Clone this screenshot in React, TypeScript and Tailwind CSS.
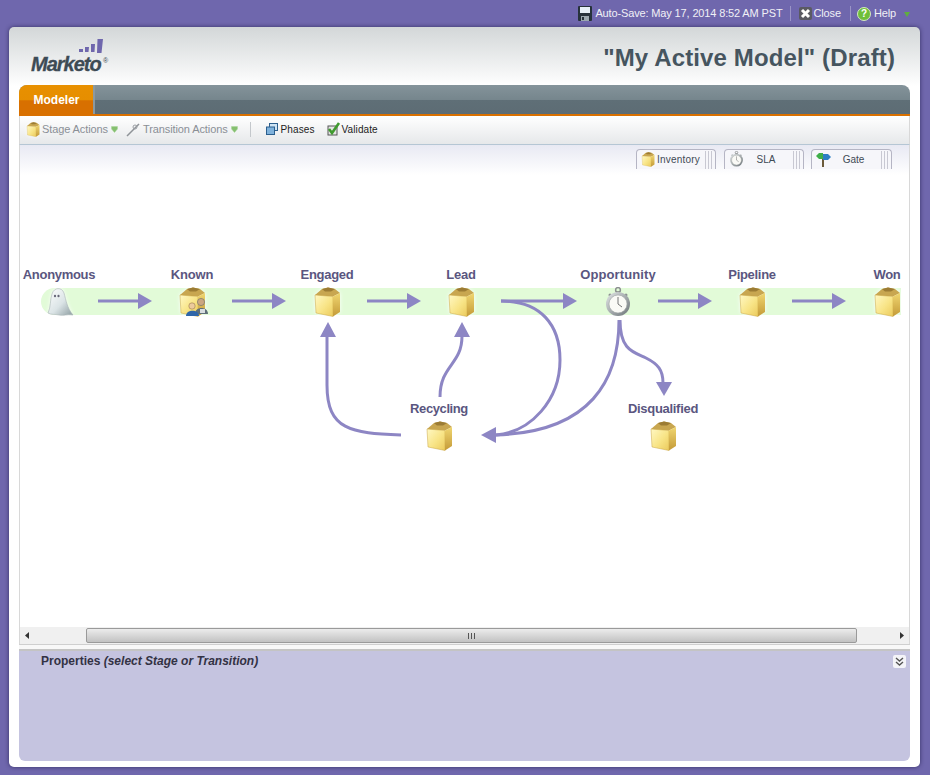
import React from "react";

const font = { fontFamily: '"Liberation Sans", Arial, sans-serif' };

function BoxIcon({ size = 28 }: { size?: number }) {
  return (
    <svg width={size} height={(size * 30) / 28} viewBox="0 0 28 30" className="drop-shadow-[0_0_2px_rgba(255,255,255,0.9)]">
      <defs>
        <linearGradient id="boxFront" x1="0" y1="0" x2="1" y2="1">
          <stop offset="0" stopColor="#fff8c4" />
          <stop offset="0.55" stopColor="#f8e486" />
          <stop offset="1" stopColor="#ebca5c" />
        </linearGradient>
        <linearGradient id="boxSide" x1="0" y1="0" x2="0" y2="1">
          <stop offset="0" stopColor="#f0d670" />
          <stop offset="1" stopColor="#c49a38" />
        </linearGradient>
      </defs>
      <path d="M2 8 L9 2 L15 0.5 L22 2 L27 6 L20 9.5 L5 9 Z" fill="#c8a650" />
      <path d="M9 2 L15 0.5 L22 2 L18 4.5 L12 4.5 Z" fill="#9c7c34" />
      <path d="M2 8 L20 9.5 L20 29.5 L3 26 Z" fill="url(#boxFront)" stroke="#c9a444" strokeWidth="0.5" />
      <path d="M20 9.5 L27 6 L27 25 L20 29.5 Z" fill="url(#boxSide)" />
    </svg>
  );
}

function GhostIcon() {
  return (
    <svg width="30" height="30" viewBox="0 0 30 30" className="drop-shadow-[0_0_2px_rgba(255,255,255,0.9)]">
      <defs>
        <linearGradient id="ghostFill" x1="0" y1="0" x2="1" y2="1">
          <stop offset="0" stopColor="#ffffff" />
          <stop offset="0.55" stopColor="#dbe4e6" />
          <stop offset="1" stopColor="#8c9ca0" />
        </linearGradient>
      </defs>
      <path d="M4 26 C7 20 6 12 8 7 C10 0 18 0 20 6 C22 13 23 21 29 28 C23 27 20 29 15 28 C11 27 7 28 4 26 Z" fill="url(#ghostFill)" stroke="#a8b4b6" strokeWidth="0.6" />
      <ellipse cx="11" cy="9" rx="1.1" ry="1.3" fill="#667" />
      <ellipse cx="14.5" cy="9" rx="1.1" ry="1.3" fill="#667" />
    </svg>
  );
}

function WatchIcon({ size = 28 }: { size?: number }) {
  return (
    <svg width={size} height={(size * 30) / 28} viewBox="0 0 28 30">
      <defs>
        <linearGradient id="watchRim" x1="0" y1="0" x2="1" y2="1">
          <stop offset="0" stopColor="#e4e8e8" />
          <stop offset="1" stopColor="#6a7276" />
        </linearGradient>
      </defs>
      <circle cx="14" cy="3" r="2.4" fill="none" stroke="#8b8f8f" strokeWidth="1.5" />
      <rect x="12.5" y="4.5" width="3" height="3" fill="#777" />
      <circle cx="6" cy="8" r="1.5" fill="#8b9090" />
      <circle cx="22" cy="8" r="1.5" fill="#8b9090" />
      <circle cx="14" cy="17" r="12" fill="url(#watchRim)" />
      <circle cx="14" cy="17" r="9" fill="#fafaf6" stroke="#a0a4a4" strokeWidth="0.6" />
      <path d="M14 17 L14 10 M14 17 L18 20" stroke="#666" strokeWidth="0.9" fill="none" />
    </svg>
  );
}

function KnownIcon() {
  return (
    <div className="relative w-[28px] h-[30px]">
      <BoxIcon size={28} />
      <svg className="absolute right-[-2px] bottom-[1px]" width="22" height="19" viewBox="0 0 22 19">
        <circle cx="15" cy="5" r="3.6" fill="#cba680" stroke="#55606a" strokeWidth="0.5" />
        <path d="M9 17 C9 9 22 9 22 17 Z" fill="#5f6f78" />
        <rect x="14" y="12" width="5" height="4" fill="#d8dde0" />
        <circle cx="6" cy="9" r="3.2" fill="#eccb9c" stroke="#8a6a3a" strokeWidth="0.5" />
        <path d="M0 19 C0 12 13 12 13 19 Z" fill="#2f66a8" />
      </svg>
    </div>
  );
}

function DropArrow() {
  return (
    <svg width="7" height="7" viewBox="0 0 7 7">
      <path d="M0.5 0.5 H6.5 V3 L3.5 6.5 L0.5 3 Z" fill="#86c070" stroke="#a8d49a" strokeWidth="0.5" />
    </svg>
  );
}

function Grip() {
  return (
    <div className="flex gap-[2px] h-[18px] ml-auto">
      <span className="w-[1px] h-full bg-[#c8c8d2]" />
      <span className="w-[1px] h-full bg-[#c8c8d2]" />
      <span className="w-[1px] h-full bg-[#c8c8d2]" />
    </div>
  );
}

function Palette({ icon, label, w, center }: { icon: React.ReactNode; label: string; w: string; center?: boolean }) {
  return (
    <div className={`flex items-center h-[20px] pl-[3px] pr-[3px] border border-b-0 border-[#b5b5c4] rounded-t-[4px] bg-[#f6f6fa] ${w}`}>
      <span className="w-[16px] h-[17px] flex items-center justify-center shrink-0">{icon}</span>
      <span className={`text-[10px] text-[#3f4a55] ${center ? "flex-1 text-center pr-[5px]" : "ml-[1px] tracking-[0.2px]"}`}>{label}</span>
      <Grip />
    </div>
  );
}

const stages = [
  { label: "Anonymous", x: 59, y: 274, icon: <GhostIcon />, track: "tracking-[-0.3px]" },
  { label: "Known", x: 192, y: 274, icon: <KnownIcon />, track: "tracking-[-0.2px]" },
  { label: "Engaged", x: 327, y: 274, icon: <BoxIcon />, track: "tracking-[-0.3px]" },
  { label: "Lead", x: 461, y: 274, icon: <BoxIcon />, track: "tracking-[-0.2px]" },
  { label: "Opportunity", x: 618, y: 274, icon: <WatchIcon />, track: "tracking-[0.1px]" },
  { label: "Pipeline", x: 752, y: 274, icon: <BoxIcon />, track: "tracking-[-0.3px]" },
  { label: "Won", x: 887, y: 274, icon: <BoxIcon />, track: "tracking-[-0.3px]" },
  { label: "Recycling", x: 439, y: 408, icon: <BoxIcon />, track: "tracking-[-0.4px]" },
  { label: "Disqualified", x: 663, y: 408, icon: <BoxIcon />, track: "tracking-[-0.3px]" },
];

const arrowLines = [
  "M97 301 H138",
  "M231 301 H272",
  "M366 301 H407",
  "M500 301 H563",
  "M657 301 H698",
  "M791 301 H832",
  "M500 301 C540 301 559 325 559 360 C559 400 530 432 495 435",
  "M618 320 C618 380 590 432 495 435",
  "M619 320 C619 350 632 352 645 358 C657 364 662 370 662 383",
  "M439 397 C439 365 461 365 461 336",
  "M400 435 C350 433 326 430 326 385 L326 336",
];

const arrowHeads = [
  "M137 293 L151 301 L137 309 Z",
  "M271 293 L285 301 L271 309 Z",
  "M406 293 L420 301 L406 309 Z",
  "M562 293 L576 301 L562 309 Z",
  "M697 293 L711 301 L697 309 Z",
  "M831 293 L845 301 L831 309 Z",
  "M495 427 L480 435 L495 443 Z",
  "M655 382 L671 382 L663 396 Z",
  "M453 337 L469 337 L461 322 Z",
  "M319 337 L335 337 L327 322 Z",
];

export default function App() {
  return (
    <div className="w-[930px] h-[775px] flex flex-col overflow-hidden bg-[#6f67ad]" style={font}>
      {/* Top bar */}
      <div className="h-[27px] shrink-0 flex items-center justify-end pr-[20px] text-[11px] tracking-[-0.14px] text-[#f0f0f6]">
        <svg width="14" height="15" viewBox="0 0 14 15" className="mr-[3px]">
          <rect width="14" height="15" rx="1" fill="#26323a" />
          <rect x="2" y="1" width="10" height="6" fill="#e6f0f6" />
          <rect x="3" y="10" width="8" height="5" fill="#9aa7ae" />
          <rect x="4" y="11" width="2" height="3" fill="#26323a" />
        </svg>
        <span>Auto-Save: May 17, 2014 8:52 AM PST</span>
        <span className="w-[1px] h-[15px] bg-[#9a94c6] ml-[8px] mr-[8px]" />
        <svg width="13" height="13" viewBox="0 0 13 13" className="mr-[1px]">
          <rect width="13" height="13" rx="2" fill="#5a5a62" />
          <path d="M3 3 L10 10 M10 3 L3 10" stroke="#fff" strokeWidth="3" />
        </svg>
        <span>Close</span>
        <span className="w-[1px] h-[15px] bg-[#9a94c6] ml-[9px] mr-[6px]" />
        <span className="w-[14px] h-[14px] rounded-full bg-[#6fbf3a] border border-[#d4e8c0] text-white text-[10px] font-bold flex items-center justify-center mr-[3px]">?</span>
        <span>Help</span>
        <svg width="6" height="6" viewBox="0 0 6 6" className="ml-[8px]">
          <path d="M0 1 H6 L3 6 Z" fill="#5fae3e" />
        </svg>
      </div>

      {/* Card */}
      <div className="w-[911px] h-[740px] ml-[9px] flex flex-col rounded-[5px] bg-white shadow-[0_0_4px_rgba(30,25,70,0.7)] bg-gradient-to-b from-[#d3d7d8] via-white via-[8%] to-white">
        {/* Header */}
        <div className="h-[58px] shrink-0 flex items-center justify-between pl-[20px] pr-[25px]">
          <div className="relative w-[84px] h-[46px] mt-[-2px]">
            <svg className="absolute left-[50px] top-[6px]" width="25" height="16" viewBox="0 0 25 16">
              <rect x="0" y="11" width="4" height="3" fill="#6f67ad" />
              <path d="M6 9 H10 L9.5 14 H6 Z M12 6 H16 L15.5 14 H12 Z M18.5 1 H24 L22.5 15 H18 Z" fill="#6f67ad" />
            </svg>
            <span className="absolute left-[2px] top-[21px] text-[20px] leading-[22px] font-bold italic text-[#3d4b55] tracking-[-1px] [-webkit-text-stroke:0.3px_#3d4b55]">Marketo</span>
            <span className="absolute left-[74px] top-[24px] text-[7px] leading-[10px] text-[#3d4b55]">®</span>
          </div>
          <h1 className="text-[24px] mt-[3px] tracking-[0.13px] font-bold text-[#46555f]">"My Active Model" (Draft)</h1>
        </div>

        {/* Main panel */}
        <div className="w-[891px] ml-[10px] flex flex-col">
          {/* Tab bar */}
          <div className="h-[31px] shrink-0 flex rounded-t-[8px] overflow-hidden border-b-[2px] border-[#d97000] bg-[linear-gradient(#84939a_0%,#76868d_50%,#5f6f77_52%,#5d6c74_100%)]">
            <div className="w-[76px] flex items-center justify-center pl-[1px] border-r-[2px] border-[#8b99a0] text-[12px] font-bold text-white bg-[linear-gradient(#e89000_0%,#e68e00_52%,#d87000_54%,#d87000_100%)]">
              Modeler
            </div>
          </div>

          {/* Toolbar */}
          <div className="h-[29px] shrink-0 flex items-center pl-[6px] pb-[2px] text-[11px] tracking-[-0.1px] border-b border-[#b5c6d4] border-x border-x-[#d8d8d8] bg-gradient-to-b from-white to-[#e6e8ea]">
            <BoxIcon size={14} />
            <span className="ml-[2px] mr-[3px] text-[#8a8f96]">Stage Actions</span>
            <DropArrow />
            <svg width="14" height="15" viewBox="0 0 14 15" className="ml-[8px]">
              <path d="M1 14 L5 10 L9 6 L13 2" stroke="#8f9398" strokeWidth="1.5" fill="none" />
              <circle cx="9" cy="5" r="2" fill="none" stroke="#9a9ea3" />
            </svg>
            <span className="ml-[3px] mr-[3px] text-[#8a8f96]">Transition Actions</span>
            <DropArrow />
            <span className="w-[1px] h-[15px] bg-[#c4c8cc] mx-[12px]" />
            <svg width="12" height="12" viewBox="0 0 12 12" className="mr-[3px] ml-[3px]">
              <rect x="3.5" y="0.5" width="8" height="7" fill="#cfe4f4" stroke="#2c5f8e" />
              <rect x="0.5" y="4" width="8" height="7.5" fill="#7fb2dc" stroke="#2c5f8e" />
            </svg>
            <span className="text-[10px] tracking-[0.1px] text-[#222]">Phases</span>
            <svg width="14" height="14" viewBox="0 0 14 14" className="ml-[12px] mr-[1px]">
              <rect x="1" y="4" width="9" height="9" fill="#e6e6e6" stroke="#555" />
              <path d="M2 7 L5 11 L12 1" stroke="#3f9a2e" strokeWidth="2.6" fill="none" />
            </svg>
            <span className="text-[10px] tracking-[0.1px] text-[#222]">Validate</span>
          </div>

          {/* Canvas */}
          <div className="relative h-[482px] shrink-0 overflow-hidden border-x border-[#d8d8d8] bg-[linear-gradient(#e8e9f3_0,#ffffff_30px)]">
            <div className="absolute right-[17px] top-[4px] flex gap-[7px]">
              <Palette icon={<BoxIcon size={14} />} label="Inventory" w="w-[80px] mr-[1px]" />
              <Palette icon={<WatchIcon size={15} />} label="SLA" w="w-[80px]" center />
              <Palette
                icon={
                  <svg width="16" height="15" viewBox="0 0 16 15">
                    <rect x="7" y="3" width="2" height="12" fill="#6b5a3a" />
                    <path d="M1 4 L4 1 H8 V7 H4 Z" fill="#3fae4a" />
                    <path d="M8 2 H13 L16 5 L13 8 H8 Z" fill="#2c7fc4" />
                  </svg>
                }
                label="Gate"
                w="w-[81px]"
                center
              />
            </div>

            {/* Green lane */}
            <div className="absolute left-[21px] top-[143px] w-[860px] h-[27px] rounded-l-[14px] bg-[#e2fbd8]" />

            <svg className="absolute left-0 top-0" width="890" height="482" viewBox="19 145 890 482">
              {arrowLines.map((d) => (
                <path key={d} d={d} fill="none" stroke="#8d86c4" strokeWidth="3" />
              ))}
              {arrowHeads.map((d) => (
                <path key={d} d={d} fill="#8d86c4" />
              ))}
            </svg>

            {stages.map((s) => (
              // canvas nodes sit at their diagram coordinates
              <div
                key={s.label}
                className="absolute w-[100px] flex flex-col items-center"
                style={{ left: s.x - 20 - 50, top: s.y - 145 - 7 }}
              >
                <span className={`h-[16px] leading-[16px] text-[13px] font-bold text-[#5a5680] whitespace-nowrap ${s.track}`}>{s.label}</span>
                <span className="mt-[4px]">{s.icon}</span>
              </div>
            ))}
          </div>

          {/* Scrollbar */}
          <div className="h-[17px] shrink-0 flex items-center border-x border-[#d8d8d8] bg-[#f0f0f0]">
            <svg width="4" height="7" viewBox="0 0 4 7" className="ml-[5px] mr-[57px]">
              <path d="M4 0 V7 L0 3.5 Z" fill="#333" />
            </svg>
            <div className="w-[771px] h-[15px] flex items-center justify-center gap-[1px] rounded-[2px] border border-[#9a9a9a] bg-gradient-to-b from-[#ececec] to-[#c2c2c2]">
              <span className="w-[1px] h-[6px] bg-[#555]" />
              <span className="w-[1px] h-[6px] bg-[#555] ml-[1px]" />
              <span className="w-[1px] h-[6px] bg-[#555] ml-[1px]" />
            </div>
            <svg width="4" height="7" viewBox="0 0 4 7" className="ml-auto mr-[5px]">
              <path d="M0 0 V7 L4 3.5 Z" fill="#333" />
            </svg>
          </div>

          <div className="h-[5px] shrink-0 border-t border-[#cfcfcf] bg-[#f8f8f8]" />

          {/* Properties */}
          <div className="h-[112px] shrink-0 flex items-start justify-between pl-[22px] pr-[4px] pt-[1px] border-t-2 border-[#c4c4c4] rounded-b-[6px] bg-[#c5c4e0]">
            <p className="text-[12px] font-bold text-[#333244]">
              Properties <em>(select Stage or Transition)</em>
            </p>
            <div className="w-[13px] h-[13px] mt-[3px] rounded-[2px] bg-[#f4f4f8] flex items-center justify-center">
              <svg width="9" height="9" viewBox="0 0 9 9">
                <path d="M1 1 L4.5 4 L8 1 M1 5 L4.5 8 L8 5" stroke="#555" strokeWidth="1.4" fill="none" />
              </svg>
            </div>
          </div>
        </div>
      </div>
    </div>
  );
}
